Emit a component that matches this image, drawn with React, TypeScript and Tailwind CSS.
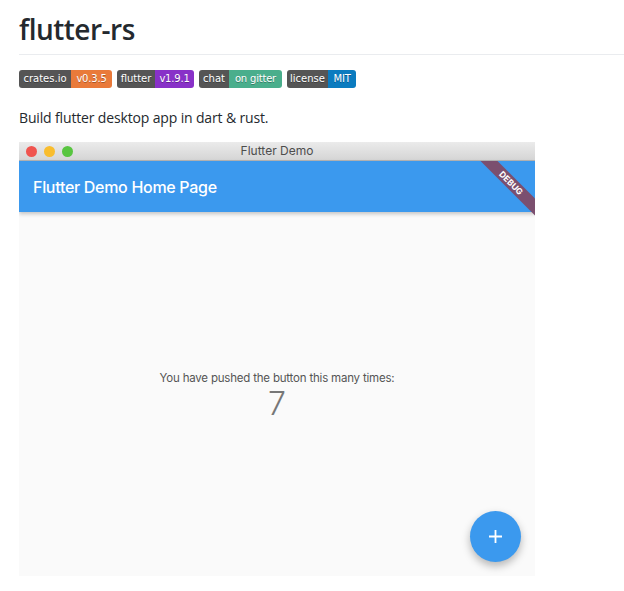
import React from "react";

type Badge = { label: string; value: string; color: string; lw: number; vw: number };

const BADGES: Badge[] = [
  { label: "crates.io", value: "v0.3.5", color: "#e97a3a", lw: 52, vw: 41 },
  { label: "flutter", value: "v1.9.1", color: "#8831c8", lw: 38, vw: 39 },
  { label: "chat", value: "on gitter", color: "#4aae8c", lw: 30, vw: 53 },
  { label: "license", value: "MIT", color: "#0b7bbf", lw: 41, vw: 28 },
];

function ShieldBadge({ badge }: { badge: Badge }) {
  return (
    <span
      className="flex h-[18px] overflow-hidden rounded-[3px] text-[10px] leading-[18px] text-white"
      style={{ fontFamily: '"DejaVu Sans", Verdana, sans-serif', textShadow: "0 1px 0 rgba(1,1,1,0.3)" }}
    >
      <span className="flex justify-center whitespace-nowrap bg-[#555]" style={{ width: badge.lw }}>
        {badge.label}
      </span>
      <span
        className="flex justify-center whitespace-nowrap tracking-[-0.2px]"
        style={{ width: badge.vw, backgroundColor: badge.color }}
      >
        {badge.value}
      </span>
    </span>
  );
}

function DemoWindow() {
  return (
    <div className="relative flex h-[434px] w-[516px] flex-col overflow-hidden bg-[#fafafa]">
      {/* title bar */}
      <div className="relative flex h-[19px] shrink-0 items-center border-b border-[#b5b5b5] bg-gradient-to-b from-[#ebebeb] to-[#d5d5d5]">
        <div className="ml-[7px] flex gap-[7px]">
          <span className="h-[11px] w-[11px] rounded-full bg-[#f0544f]" />
          <span className="h-[11px] w-[11px] rounded-full bg-[#f9bd2e]" />
          <span className="h-[11px] w-[11px] rounded-full bg-[#58c540]" />
        </div>
        <span
          className="absolute inset-x-0 text-center text-[12px] text-[#4d4d4d]"
          style={{ fontFamily: "Inter, sans-serif" }}
        >
          Flutter Demo
        </span>
      </div>

      {/* app bar */}
      <div
        className="relative z-10 flex h-[51px] shrink-0 items-center bg-[#3b99ee] pl-[14px] shadow-[0_2px_4px_rgba(0,0,0,0.22)]"
        style={{ fontFamily: "Inter, sans-serif" }}
      >
        <span className="text-[16px] font-medium tracking-[-0.3px] text-white">Flutter Demo Home Page</span>
      </div>

      {/* body */}
      <div className="flex flex-1 flex-col items-center pt-[158px]" style={{ fontFamily: "Inter, sans-serif" }}>
        <p className="text-[11.5px] tracking-[-0.2px] text-[#555]">You have pushed the button this many times:</p>
        <p className="mt-[-1px] text-[32px] font-light leading-[36px] text-[#777]">7</p>
      </div>

      <button className="absolute bottom-[14px] right-[14px] flex h-[51px] w-[51px] items-center justify-center rounded-full bg-[#3b99ee] shadow-[0_4px_8px_rgba(0,0,0,0.28)]">
        <svg width="15" height="15" viewBox="0 0 15 15">
          <path d="M7.5 1v13M1 7.5h13" stroke="white" strokeWidth="1.8" />
        </svg>
      </button>

      {/* debug banner */}
      <div className="pointer-events-none absolute right-0 top-[19px] z-20 h-[56px] w-[56px] overflow-hidden">
        <div
          className="absolute left-[-8px] top-[16px] h-[12px] w-[80px] rotate-45 bg-[#7b4f6f] text-center text-[8.5px] font-bold leading-[12px] text-white"
          style={{ fontFamily: "Inter, sans-serif" }}
        >
          DEBUG
        </div>
      </div>
    </div>
  );
}

export default function App() {
  return (
    <div
      className="min-h-screen bg-white pl-[19px] text-[#24292e]"
      style={{ fontFamily: '"Open Sans", "Noto Sans", sans-serif' }}
    >
      <h1 className="border-b border-[#eaecef] pb-[6px] pt-[10px] text-[28px] font-semibold leading-[38px] tracking-[-0.5px]">
        flutter-rs
      </h1>
      <div className="mt-[15px] flex gap-[5px]">
        {BADGES.map((b) => (
          <ShieldBadge key={b.label} badge={b} />
        ))}
      </div>
      <p className="mt-[19px] text-[14px] leading-[21px] tracking-[-0.15px]">Build flutter desktop app in dart &amp; rust.</p>
      <div className="mt-[14px]">
        <DemoWindow />
      </div>
    </div>
  );
}
